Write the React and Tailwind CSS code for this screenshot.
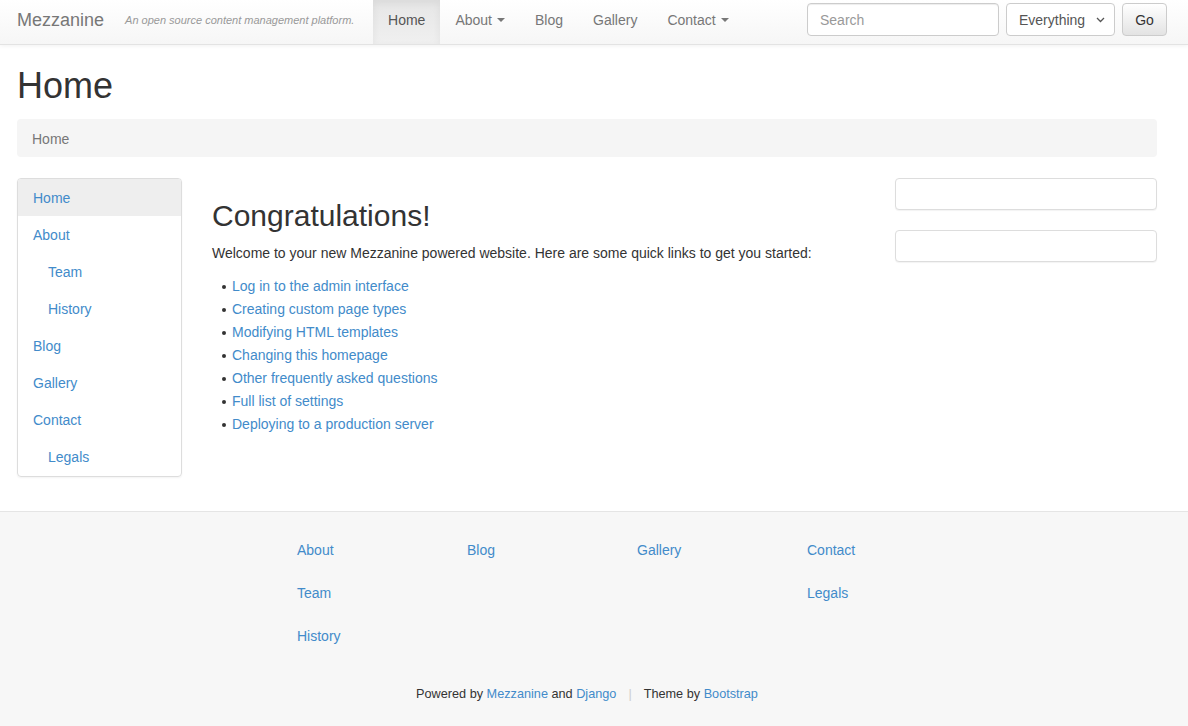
import React from "react";

const font = { fontFamily: '"Liberation Sans", Arial, sans-serif' };

function Caret() {
  return (
    <span className="inline-block ml-[5px] align-middle w-0 h-0 border-t-[4px] border-t-current border-x-[4px] border-x-transparent" />
  );
}

function NavLink({ children, active, caret }) {
  return (
    <a
      className={
        "flex items-center h-[44px] pb-[4px] px-[15px] text-[14px] " +
        (active
          ? "text-[#555] bg-gradient-to-b from-[#e6e6e6] to-[#f0f0f0] shadow-[inset_0_3px_9px_rgba(0,0,0,0.06)]"
          : "text-[#777]")
      }
    >
      {children}
      {caret && <Caret />}
    </a>
  );
}

const sideItems = [
  ["Home", 0, true],
  ["About", 0],
  ["Team", 1],
  ["History", 1],
  ["Blog", 0],
  ["Gallery", 0],
  ["Contact", 0],
  ["Legals", 1],
];

const links = [
  "Log in to the admin interface",
  "Creating custom page types",
  "Modifying HTML templates",
  "Changing this homepage",
  "Other frequently asked questions",
  "Full list of settings",
  "Deploying to a production server",
];

export default function App() {
  return (
    <div style={font} className="bg-white text-[#333] text-[14px] leading-[20px] min-h-[726px]">
      {/* Navbar */}
      <div className="h-[45px] border-b border-[#e3e3e3] bg-gradient-to-b from-white to-[#f6f6f6] shadow-[0_1px_4px_rgba(0,0,0,0.06)] flex items-start">
        <a className="ml-[17px] mt-[10px] text-[18px] text-[#777] leading-[20px]">Mezzanine</a>
        <span className="ml-[21px] mt-[12px] text-[11px] leading-[16px] italic text-[#999] w-[248px]">
          An open source content management platform.
        </span>
        <nav className="flex">
          <NavLink active>Home</NavLink>
          <NavLink caret>About</NavLink>
          <NavLink>Blog</NavLink>
          <NavLink>Gallery</NavLink>
          <NavLink caret>Contact</NavLink>
        </nav>
        <div className="ml-auto mr-[21px] mt-[3px] flex items-center gap-[7px]">
          <div className="w-[192px] h-[33px] border border-[#ccc] rounded-[4px] bg-white flex items-center px-[12px] text-[#999] shadow-[inset_0_1px_1px_rgba(0,0,0,0.075)]">
            Search
          </div>
          <div className="w-[109px] h-[33px] border border-[#ccc] rounded-[4px] bg-white flex items-center pl-[12px] pr-[9px] text-[#555]">
            <span>Everything</span>
            <svg className="ml-auto" width="9" height="6" viewBox="0 0 9 6">
              <path d="M1 1l3.5 3.5L8 1" fill="none" stroke="#555" strokeWidth="1.3" />
            </svg>
          </div>
          <div className="w-[45px] h-[33px] border border-[#ccc] rounded-[4px] bg-gradient-to-b from-white to-[#e3e3e3] flex items-center justify-center text-[#333]">
            Go
          </div>
        </div>
      </div>

      {/* Header */}
      <div className="pl-[17px] w-[1157px]">
        <h1 className="mt-[21px] text-[36px] leading-[40px] text-[#333]">Home</h1>
        <div className="mt-[13px] h-[38px] pt-[1px] bg-[#f5f5f5] rounded-[4px] flex items-center px-[15px] text-[#777]">
          Home
        </div>
      </div>

      {/* Main row */}
      <div className="ml-[2px] w-[1170px] flex mt-[21px]">
        <div className="w-[195px] px-[15px]">
          <div className="border border-[#ddd] rounded-[4px] overflow-hidden shadow-[0_1px_2px_rgba(0,0,0,0.05)]">
            {sideItems.map(([label, indent, active]) => (
              <div
                key={label}
                className={
                  "h-[37px] flex items-center text-[#428bca] " +
                  (indent ? "pl-[30px]" : "pl-[15px]") +
                  (active ? " bg-[#eeeeee]" : "")
                }
              >
                {label}
              </div>
            ))}
            <div className="h-[1px]" />
          </div>
        </div>
        <div className="w-[683px] px-[15px]">
          <h2 className="mt-[21px] text-[30px] leading-[33px] text-[#333]">Congratulations!</h2>
          <p className="mt-[11px]">
            Welcome to your new Mezzanine powered website. Here are some quick links to get you started:
          </p>
          <ul className="mt-[12px] pl-[20px]">
            {links.map((l) => (
              <li key={l} className="leading-[23px] flex items-center">
                <span className="w-[4px] h-[4px] rounded-full bg-[#333] -ml-[10px] mr-[6px]" />
                <a className="text-[#428bca]">{l}</a>
              </li>
            ))}
          </ul>
        </div>
        <div className="w-[292px] px-[15px] flex flex-col gap-[20px]">
          <div className="h-[32px] border border-[#ddd] rounded-[4px] bg-white shadow-[0_1px_1px_rgba(0,0,0,0.05)]" />
          <div className="h-[32px] border border-[#ddd] rounded-[4px] bg-white shadow-[0_1px_1px_rgba(0,0,0,0.05)]" />
        </div>
      </div>

      {/* Footer */}
      <div className="mt-[34px] border-t border-[#e5e5e5] bg-[#f7f7f7] pb-[24px]">
        <div className="pl-[297px] pt-[28px] grid grid-cols-[170px_170px_170px_170px] text-[#428bca]">
          <div className="flex flex-col">
            <span className="leading-[20px] mb-[23px]">About</span>
            <span className="leading-[20px] mb-[23px]">Team</span>
            <span className="leading-[20px]">History</span>
          </div>
          <div><span>Blog</span></div>
          <div><span>Gallery</span></div>
          <div className="flex flex-col">
            <span className="leading-[20px] mb-[23px]">Contact</span>
            <span className="leading-[20px]">Legals</span>
          </div>
        </div>
        <div className="ml-[17px] w-[1140px] mt-[38px] text-center text-[12.7px] text-[#333]">
          Powered by <a className="text-[#428bca]">Mezzanine</a> and <a className="text-[#428bca]">Django</a>
          <span className="text-[#ccc] mx-[12px]">|</span>
          Theme by <a className="text-[#428bca]">Bootstrap</a>
        </div>
      </div>
    </div>
  );
}
